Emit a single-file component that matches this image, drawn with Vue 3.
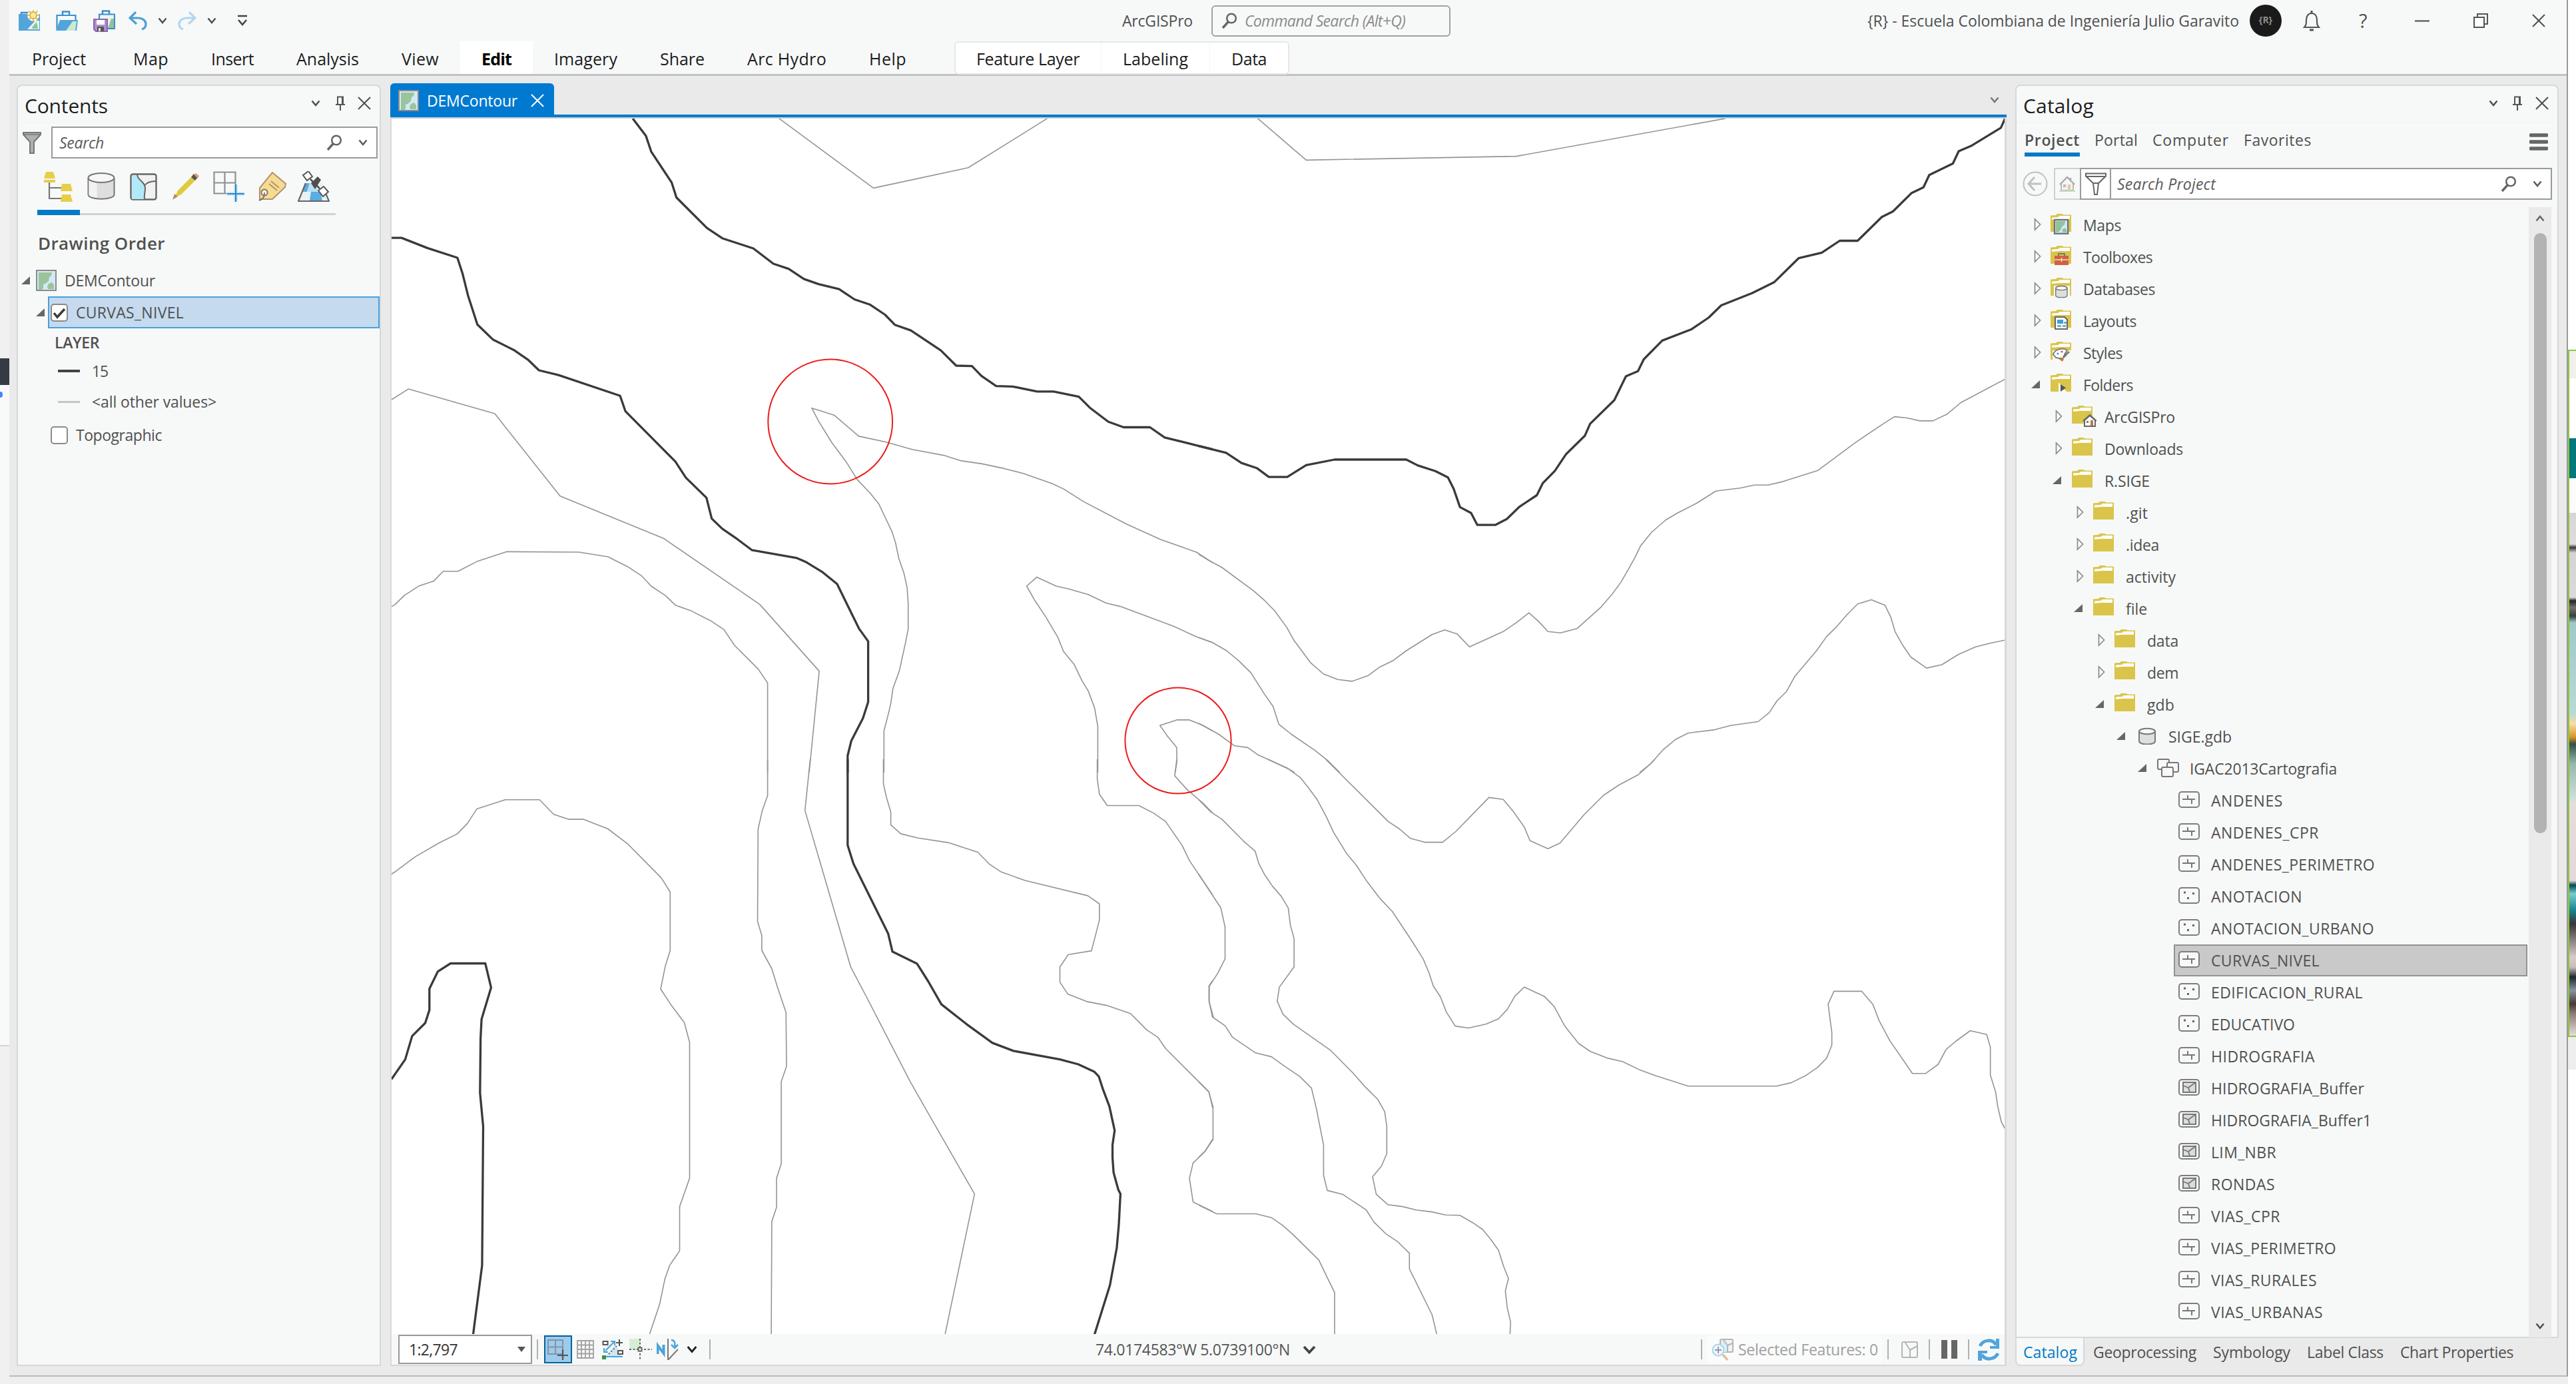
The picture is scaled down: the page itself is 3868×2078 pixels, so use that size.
<script setup>
import { h } from 'vue'

/* Spreads a label over an exact width, in pixels, through its letter spacing. */
const vFit = {
  mounted(el, { value }) {
    const natural = el.getBoundingClientRect().width
    el.style.letterSpacing = (value - natural) / el.textContent.length + 'px'
  }
}

const folder = '<path fill="#dac44a" d="M0 2.5L8 2l2-2h7l3 1.5h11V27H0z"/><path fill="#fdfdf8" d="M2 5.5l9-.5 3-2h15v5H12L2 9z"/>'
const mapArt = '<rect x="1" y="1" width="29" height="30" fill="#d3e9f5" stroke="#8b8b8b" stroke-width="2"/><path fill="#9bc49d" d="M4 4h20l-1 5-3 2-1 6-5 4-3 1v6l-2 2H4z"/><path fill="#9bc49d" d="M19 21l5-2 3 4v6h-9l-1-4z"/>'
const frame = '<rect x="1" y="1" width="30" height="23" rx="4" fill="#f8f8f8" stroke="#7d7d7d" stroke-width="2"/>'
const cyl = '<path fill="#dedede" stroke="#777" stroke-width="2" d="M1 5v15c0 6 24 6 24 0V5"/><ellipse cx="13" cy="5" rx="12" ry="4.2" fill="#f7f7f7" stroke="#777" stroke-width="2"/>'
const lens = '<circle cx="15" cy="8.5" r="6.8" fill="none" stroke="#666" stroke-width="2.6"/><path d="M10.5 13.5L2 23" stroke="#666" stroke-width="3.4"/>'

const art = {
  caret: [14, 10, '<path d="M1.5 1.5L7 8l5.500-6.500" fill="none" stroke="currentColor" stroke-width="2.500"/>'],
  bigcaret: [20, 13, '<path d="M2 2l8 8.500L18 2" fill="none" stroke="#444" stroke-width="3.800"/>'],
  up: [14, 10, '<path d="M1.500 8.500L7 2l5.500 6.500" fill="none" stroke="#666" stroke-width="2.500"/>'],
  close: [20, 20, '<path d="M1 1l18 18M19 1L1 19" stroke="currentColor" stroke-width="2" fill="none"/>'],
  pin: [14, 22, '<path d="M3 12V1.500h8V12M0 13h14M7 13v9" stroke="#555" stroke-width="2" fill="none"/><path d="M9 2h2v11H9z" fill="#555"/>'],
  lens: [24, 25, lens],
  newp: [32, 32, '<path d="M4 7V4h10v3" fill="none" stroke="#3d8fca" stroke-width="2.500"/><path fill="#52a4db" d="M0 6h32v25H0z"/><path fill="#e8f4ea" d="M13 29L25 16h6v13z"/><path fill="#8fc39b" d="M20 26l7-8 2 10h-8z"/><circle cx="22" cy="8" r="9" fill="#f7f9f9"/><path d="M22-1v18M13 8h18M15.500 1.500l13 13M28.500 1.500l-13 13" stroke="#e7c047" stroke-width="1.800"/><circle cx="22" cy="8" r="5" fill="#fbe9a8" stroke="#ddb33b" stroke-width="1.800"/>'],
  open: [33, 31, '<path d="M10 6V1.500h10V6" fill="none" stroke="#3d8fca" stroke-width="2.500"/><path fill="#f5fafc" stroke="#3d8fca" stroke-width="2.200" d="M1.500 7h28v20h-28z"/><path fill="#52a4db" d="M0 30l6-16h27l-2 16z"/><path fill="#cce9d1" d="M15 30l10-14h6l-2 14z"/>'],
  save: [33, 33, '<path d="M14 6V1.500h10V6" fill="none" stroke="#3d8fca" stroke-width="2.500"/><path fill="#eaf5f2" stroke="#3d8fca" stroke-width="2.200" d="M9 6.500h23V28H9z"/><path fill="#8fc39b" d="M22 27l5-14h4v14z"/><path fill="#b18ed0" stroke="#8a66ad" stroke-width="2" d="M1 14h20v18H4l-3-3z"/><path fill="#fff" d="M5 15h12v7H5z"/><path fill="#555" d="M6 25h10v7H6z"/><path fill="#ddd" d="M8 27h3v5H8z"/>'],
  undo: [28, 28, '<path d="M11 1L2 10l10 9M3 10h11c7 0 12 4 12 9 0 4-2 7-6 8" fill="none" stroke="currentColor" stroke-width="3.200"/>'],
  redo: [28, 28, '<path d="M17 1l9 9-10 9M25 10H14C7 10 2 14 2 19c0 4 2 7 6 8" fill="none" stroke="currentColor" stroke-width="3.200"/>'],
  custom: [16, 18, '<path d="M1 2h14M2 8l6 7 6-7" fill="none" stroke="#444" stroke-width="2.600"/>'],
  bell: [26, 32, '<path d="M2 26c3-3 3-6 3-11 0-6 3-10 8-10s8 4 8 10c0 5 0 8 3 11z" fill="none" stroke="#555" stroke-width="2.200"/><path d="M13 1v4M10 30h6" stroke="#555" stroke-width="3"/>'],
  restore: [22, 22, '<path d="M6 5V1h15v15h-4" fill="none" stroke="#555" stroke-width="2"/><path d="M1 6h15v15H1z" fill="#fff" stroke="#555" stroke-width="2"/>'],
  minimize: [22, 3, '<path d="M0 1.500h22" stroke="#555" stroke-width="2.200"/>'],
  funnel: [28, 34, '<path d="M1 2h26v3L17 16v17h-6V16L1 5z" fill="#b0b0b0" stroke="#777" stroke-width="2"/><path d="M1 5h26" stroke="#777" stroke-width="1.500"/>'],
  funnel2: [32, 34, '<path d="M1 1.500h30v4L20 16l-2 17h-4L12 16 1 5.500z" fill="#fff" stroke="#666" stroke-width="2"/><path d="M1 6h30M12 16h8" stroke="#666" stroke-width="2"/>'],
  order: [44, 45, '<path d="M9 16v24h18M9 24h18" fill="none" stroke="#777" stroke-width="2.200"/><path fill="#e5cf47" d="M4 0h11l3 10H1zM1 12h17v4H1zM28 18h13l3 11H26zM28 34h13l3 11H26z"/>'],
  drum: [42, 42, '<path fill="#dedede" stroke="#777" stroke-width="2" d="M1.500 8v25c0 9 39 9 39 0V8"/><path fill="#f3f3f3" d="M2.500 12h12v26c-7-1-12-3-12-5z"/><ellipse cx="21" cy="8" rx="19.500" ry="7" fill="#f7f7f7" stroke="#777" stroke-width="2"/>'],
  select: [41, 41, '<rect x="1.500" y="1.500" width="38" height="38" rx="3" fill="#f1f1f1" stroke="#666" stroke-width="2.400"/><path fill="#b2e9f8" d="M3 3h8c0 8 12 10 12 20 0 6-2 10-1 16H3z"/><path d="M11 2c0 9 12 10 12 21 0 6-2 10-1 17M22 19c3-5 9-7 17-7" fill="none" stroke="#666" stroke-width="2"/>'],
  pencil: [40, 40, '<path d="M3 37l5-11L30 4l6 5L13 32z" fill="#e0c93c"/><path d="M28 6l4-5 6 5-4 5z" fill="#555"/><path d="M32 2l3-2 5 4-2 4z" fill="#e49a84"/><path d="M0 40l3-9 5 4z" fill="#b88962"/>'],
  snap: [47, 47, '<path d="M1.500 1.500h32v32h-32zM17.500 1.500v32M1.500 17.500h32" fill="none" stroke="#8f8f8f" stroke-width="2.200"/><path d="M34 20v26M20 34h27" stroke="#cbe7f8" stroke-width="6"/><path d="M34 20v26M21 34h26" stroke="#2b86c4" stroke-width="2.200"/>'],
  tag: [44, 44, '<path d="M22 1l20 17-1 5-19 18H3V24z" fill="#f3dd93" stroke="#b8906a" stroke-width="2"/><path d="M17 18l12 10M20 14l12 10" stroke="#b8906a" stroke-width="2"/><circle cx="10" cy="31" r="4.500" fill="#fff" stroke="#8a7158" stroke-width="2"/><path d="M10 31c0 6-1 10-8 12" fill="none" stroke="#777" stroke-width="2"/>'],
  sat: [48, 47, '<path d="M11 18h26l10 27H1z" fill="#e6f2f4"/><path d="M11 18h7l-4 13H6zM20 31h14l3 13H18z" fill="#5aade0"/><path d="M18 18h10l2 13H14z" fill="#b9dff2"/><path d="M12 18L1 45h46l-5-12" fill="none" stroke="#666" stroke-width="2.200"/><path d="M8 6l8-6 6 8-8 6zM31 29l8-6 7 8-8 7z" fill="#fff" stroke="#555" stroke-width="2"/><path d="M20 18l10-10 5 5-9 14z" fill="#4f4f4f"/><path d="M19 12l14 14" stroke="#4f4f4f" stroke-width="2.500"/>'],
  mapdoc: [31, 32, mapArt],
  tri: [14, 13, '<path d="M13 0v12H0z" fill="#666"/>'],
  right: [11, 20, '<path d="M1.500 2v16l8-8z" fill="#fff" stroke="#8a8a8a" stroke-width="1.700"/>'],
  tick: [26, 27, '<rect x="1" y="1" width="24" height="25" rx="4" fill="#fff" stroke="#8a8a8a" stroke-width="2"/><path d="M5 14l5 6L21 8" fill="none" stroke="#3c3c3c" stroke-width="3.500"/>'],
  box: [26, 27, '<rect x="1" y="1" width="24" height="25" rx="4" fill="#fff" stroke="#8a8a8a" stroke-width="2"/>'],
  back: [38, 38, '<circle cx="19" cy="19" r="17.500" fill="none" stroke="#c0c0c0" stroke-width="2"/><path d="M18 9L9 19l9 10M9 19h19" fill="none" stroke="#c0c0c0" stroke-width="3"/>'],
  home: [24, 24, '<path d="M3 12v10h18V12" fill="#f2f2f2" stroke="#bbb" stroke-width="2"/><path d="M1 13L12 2l11 11M17 3v5" fill="none" stroke="#aaa" stroke-width="2.400"/><path d="M6 13h4v4H6z" fill="#bbb"/><path d="M13 13h4v9h-4z" fill="#e4c9ab"/><path d="M0 23h24" stroke="#c0dfbe" stroke-width="2"/>'],
  burger: [28, 28, '<path d="M2 4h24M2 14h24M2 24h24" stroke="#666" stroke-width="5.500" stroke-linecap="round"/>'],
  folder: [37, 32, folder],
  fMaps: [37, 32, folder + '<g transform="translate(6 9) scale(.65)"><rect width="31" height="32" fill="#d3e9f5" stroke="#6f7478" stroke-width="3.600"/><path fill="#8fc39b" d="M3 3h22l-2 8-6 5-3 8-6 5H3zM18 22l6-3 4 4v6h-9z"/></g>'],
  fTools: [37, 32, folder + '<path d="M12 16v-4h9v4" fill="none" stroke="#777" stroke-width="2"/><path d="M6 15h21v14H6z" fill="#d1623f"/><path d="M6 21h21M16.500 18v6" stroke="#f3d9cf" stroke-width="1.600"/>'],
  fData: [37, 32, folder + '<path d="M5 12h24v15H5z" fill="#fbfbf6"/><g transform="translate(7 12) scale(.72 .72)">' + cyl + '</g>'],
  fLayouts: [37, 32, folder + '<path d="M7 11h14l4 4v14H7z" fill="#fff" stroke="#666" stroke-width="2"/><path d="M10 15h9v6h-9z" fill="#3d9fdc"/><path d="M20 18h4v3h-4zM10 23h6v3h-6zM18 23h5v3h-5z" fill="#7da9c4"/>'],
  fStyles: [37, 32, folder + '<path d="M3 13h28v14H3z" fill="#f8f8f0"/><path d="M4 19C7 10 20 9 25 13l-4 6 2 2-6 5-9-2z" fill="#fdfdfa" stroke="#777" stroke-width="1.800"/><path d="M28 15l-9 8" stroke="#777" stroke-width="3"/><circle cx="11" cy="18" r="1.600" fill="#3d9fdc"/><circle cx="17" cy="15" r="1.600" fill="#c55"/><path d="M14 25l5 3" stroke="#c07c4b" stroke-width="4"/>'],
  fFolders: [37, 32, folder + '<path d="M12 13v16h14z" fill="#f8f8f0"/><path d="M15 16v11l8-5.500z" fill="#555"/>'],
  fHome: [37, 32, folder + '<path d="M19 22v9h16v-9l-8-7z" fill="#fff" stroke="#666" stroke-width="2"/><path d="M17 23l10-9 10 9" fill="none" stroke="#666" stroke-width="2"/><path d="M22 23h3v3h-3z" fill="#777"/><path d="M28 22h4v8h-4z" fill="#b97a4b"/>'],
  gdb: [37, 26, '<g transform="translate(4 1)">' + cyl + '</g>'],
  dataset: [37, 28, '<g fill="#f8f8f8" stroke="#777" stroke-width="2"><rect x="1" y="1" width="17" height="15" rx="2"/><rect x="15" y="6" width="17" height="14" rx="2"/><rect x="7" y="13" width="17" height="14" rx="2"/></g>'],
  line: [37, 25, frame + '<path d="M6 12h19M14 6v6M20 12v7" stroke="#777" stroke-width="2" fill="none"/>'],
  point: [37, 25, frame + '<path d="M8 6.500h3v3H8zM21 8h3v3h-3zM13 15h3v3h-3z" fill="#666"/>'],
  poly: [37, 25, frame + '<path d="M7 5h19v15H7z" fill="#dcdcdc" stroke="#777" stroke-width="2"/><path d="M7 10l8 3 11-8M15 13l2 7" fill="none" stroke="#777" stroke-width="1.800"/>'],
  drop: [12, 8, '<path d="M0 0h12L6 8z" fill="#555"/>'],
  gridplus: [34, 34, '<path d="M2 2h22v21H2zM13 2v21M2 12.500h22" fill="none" stroke="#8693a0" stroke-width="2"/><path d="M24 16v16M16 25h16" stroke="#555" stroke-width="2.200"/>'],
  grid: [26, 28, '<path d="M1 1h24v26H1zM7 1v26M13 1v26M19 1v26M1 7.500h24M1 14h24M1 20.500h24" fill="none" stroke="#a2a2a2" stroke-width="1.800"/>'],
  snap2: [34, 30, '<path d="M5 26L20 8l10 18z" fill="#cde7f7"/><path d="M5 17L18 4M5 26h26" stroke="#4aa3dc" stroke-width="2.200"/><path d="M3 13v6h6M13 3h6v6" fill="none" stroke="#4aa3dc" stroke-width="2"/><path d="M10 22L22 10" stroke="#666" stroke-dasharray="2 3" stroke-width="2"/><path d="M1.500 3h7v5h-7zM24 17h7v5h-7z" fill="#fff" stroke="#555" stroke-width="2"/><path d="M0 24h6v6H0z" fill="#3b9247"/><path d="M26 0v10M21 5h10" stroke="#555" stroke-width="2"/>'],
  cross: [34, 32, '<path fill="#d7eed6" d="M0 0h16v16H0z"/><path d="M16 0v32M0 16h34" stroke="#666" stroke-width="2" stroke-dasharray="3 2.500"/><path fill="#fff" stroke="#666" stroke-width="2" d="M13.500 13.500h5v5h-5z"/>'],
  north: [34, 32, '<path d="M1.500 23V10l9 12V9" fill="none" stroke="#4aa3dc" stroke-width="4"/><path d="M17 0v32l15-16" fill="none" stroke="#777" stroke-width="2"/><path d="M22 2c5 0 6 4 5 11M22 9l5 5 5-5" fill="none" stroke="#4aa3dc" stroke-width="2.500"/>'],
  zoomsel: [34, 33, '<rect x="13" y="1" width="19" height="19" rx="2" fill="#f2f2f2" stroke="#b5b5b5" stroke-width="2"/><path d="M14 3h5l6 9-3 8h-8z" fill="#d3f1fa"/><path d="M18 2l6 8v10M24 10l7-3" fill="none" stroke="#b5b5b5" stroke-width="2"/><circle cx="10" cy="17" r="8.500" fill="#eef6fb" stroke="#abd3ee" stroke-width="2"/><path d="M10 12v10M5 17h10" stroke="#999" stroke-width="2"/><path d="M17 24l7 8" stroke="#dcc0a4" stroke-width="3.500"/>'],
  clearsel: [25, 25, '<rect x="1" y="1" width="23" height="23" rx="2" fill="none" stroke="#b5b5b5" stroke-width="2"/><path d="M6 2l7 11v11M13 13l11-6" fill="none" stroke="#b5b5b5" stroke-width="2"/>'],
  pause: [24, 28, '<path d="M0 0h9v28H0zM15 0h9v28h-9z" fill="#666"/>'],
  refresh: [33, 33, '<path d="M3 11C8 1 22 0 27 9M30 22C25 32 11 33 6 24" fill="none" stroke="#52a4db" stroke-width="5"/><path d="M32 0v15H18v-4h9V0zM0 33V18h14v4H6v11z" fill="#52a4db"/>']
}

const Icon = ({ name }) => {
  const [w, ht, body] = art[name]
  return h('svg', { width: w, height: ht, viewBox: `0 0 ${w} ${ht}`, innerHTML: body })
}

const tabs = [['Project', 81], ['Map', 53], ['Insert', 64], ['Analysis', 94], ['View', 56], ['Edit', 45], ['Imagery', 95], ['Share', 67], ['Arc Hydro', 119], ['Help', 56]]
const contextTabs = [['Feature Layer', 155], ['Labeling', 98], ['Data', 53]]
const listModes = ['order', 'drum', 'select', 'pencil', 'snap', 'tag', 'sat']
const catalogTabs = [['Project', 83], ['Portal', 65], ['Computer', 115], ['Favorites', 102]]
const paneTabs = [['Catalog', 81], ['Geoprocessing', 155], ['Symbology', 116], ['Label Class', 115], ['Chart Properties', 170]]

/* level, state (c closed, o open, - leaf), icon, label, label width */
const tree = [
  [0, 'c', 'fMaps', 'Maps', 57], [0, 'c', 'fTools', 'Toolboxes', 104], [0, 'c', 'fData', 'Databases', 108],
  [0, 'c', 'fLayouts', 'Layouts', 80], [0, 'c', 'fStyles', 'Styles', 59], [0, 'o', 'fFolders', 'Folders', 75],
  [1, 'c', 'fHome', 'ArcGISPro', 106], [1, 'c', 'folder', 'Downloads', 118], [1, 'o', 'folder', 'R.SIGE', 68],
  [2, 'c', 'folder', '.git', 33], [2, 'c', 'folder', '.idea', 50], [2, 'c', 'folder', 'activity', 75],
  [2, 'o', 'folder', 'file', 32], [3, 'c', 'folder', 'data', 47], [3, 'c', 'folder', 'dem', 47],
  [3, 'o', 'folder', 'gdb', 41], [4, 'o', 'gdb', 'SIGE.gdb', 95], [5, 'o', 'dataset', 'IGAC2013Cartografia', 221],
  [6, '-', 'line', 'ANDENES', 108], [6, '-', 'line', 'ANDENES_CPR', 162], [6, '-', 'line', 'ANDENES_PERIMETRO', 246],
  [6, '-', 'point', 'ANOTACION', 137], [6, '-', 'point', 'ANOTACION_URBANO', 245], [6, '-', 'line', 'CURVAS_NIVEL', 163],
  [6, '-', 'point', 'EDIFICACION_RURAL', 228], [6, '-', 'point', 'EDUCATIVO', 126], [6, '-', 'line', 'HIDROGRAFIA', 156],
  [6, '-', 'poly', 'HIDROGRAFIA_Buffer', 230], [6, '-', 'poly', 'HIDROGRAFIA_Buffer1', 241], [6, '-', 'poly', 'LIM_NBR', 98],
  [6, '-', 'poly', 'RONDAS', 96], [6, '-', 'line', 'VIAS_CPR', 104], [6, '-', 'line', 'VIAS_PERIMETRO', 188],
  [6, '-', 'line', 'VIAS_RURALES', 159], [6, '-', 'line', 'VIAS_URBANAS', 168]
]

const G = 1240 / 1568
const N = 1000 / 1568
const S = 900 / 1568
const sheets = [
  {
    x: -8, y: -18, sx: G, sy: N,
    index: [
      '468,28 493,69 503,106 542,179 551,214 609,286 638,310 697,334 735,370 764,382 793,406 821,418 860,430 889,454 918,466 947,490 966,514 996,527 1053,574 1082,610 1112,611 1130,634 1158,658 1189,659 1236,671 1267,671 1315,683 1336,709 1371,742 1400,755 1450,755 1478,779 1543,799 1569,807',
      '10,309 29,309 78,333 135,356 145,394 155,444 173,513 203,549 242,573 270,597 290,621 327,632 444,681 454,717 549,836 569,874 608,921 618,970 638,994 666,1018 694,1044 780,1063 798,1073 827,1095 856,1124 898,1230 915,1259 915,1402 905,1440 883,1493 876,1528 876,1568'
    ],
    minor: [
      '746,28 925,192 1105,144 1255,28',
      '10,690 42,665 206,723 330,917 527,1017 709,1172 822,1329 803,1568',
      '10,1177 16,1173 34,1151 63,1128 90,1117 108,1094 136,1094 174,1070 228,1048 366,1049 421,1060 458,1083 485,1105 503,1129 530,1151 549,1174 577,1186 615,1210 641,1231 661,1268 706,1324 724,1357 724,1568',
      '945,1568 945,1470 954,1427 958,1405 962,1370 974,1329 986,1262 991,1230 991,1170 989,1133 983,1099 973,1063 967,1027 960,1000 948,969 935,935 918,909 894,878 873,836 846,791 821,741 808,710 851,727 897,776 949,790 998,807 1058,821 1092,834 1131,841 1173,852 1210,864 1265,888 1287,901 1324,930 1404,982 1470,1019 1538,1049 1569,1074',
      '1351,1568 1351,1459 1345,1416 1333,1376 1321,1352 1306,1313 1286,1283 1275,1249 1252,1201 1232,1164 1216,1129 1235,1108 1272,1129 1297,1136 1333,1149 1367,1169 1394,1177 1494,1223 1538,1248 1569,1262',
      '1498,1568 1501,1543 1501,1509 1482,1480 1469,1457 1501,1444 1525,1444 1551,1457 1569,1470'
    ]
  },
  {
    x: 1212, y: -18, sx: G, sy: N,
    index: ['0,799 52,815 81,839 110,851 133,872 168,872 204,844 258,831 394,831 416,845 449,858 473,873 484,900 496,943 517,957 529,985 563,985 585,971 609,942 642,915 653,887 676,858 697,819 733,775 743,747 789,691 811,635 834,623 845,595 880,551 936,524 968,497 992,468 1051,439 1093,413 1139,357 1183,344 1217,316 1251,316 1297,260 1318,247 1353,204 1376,190 1387,161 1432,134 1443,105 1466,93 1523,50 1531,28'],
    minor: [
      '112,28 204,126 603,117 1000,28',
      '0,1054 20,1069 44,1085 105,1141 125,1163 144,1187 167,1226 180,1255 212,1309 237,1336 264,1349 291,1353 321,1340 343,1320 368,1305 394,1281 443,1243 467,1232 491,1242 514,1272 578,1236 603,1215 627,1192 646,1213 663,1236 687,1239 718,1229 764,1178 785,1148 802,1119 815,1091 828,1062 839,1034 860,1002 887,973 909,957 945,934 982,905 1028,898 1055,891 1081,891 1109,883 1175,857 1248,790 1302,745 1321,730 1345,733 1369,740 1394,740 1421,724 1447,697 1532,641',
      '0,1250 26,1262 53,1281 77,1306 99,1333 124,1382 141,1412 152,1454 175,1477 221,1516 245,1540 268,1568',
      '0,1452 37,1477 68,1505 93,1509 112,1526 139,1541 169,1558 182,1568',
      '837,1568 859,1546 881,1515 905,1490 929,1475 980,1467 1010,1457 1062,1448 1083,1427 1098,1399 1116,1377 1132,1341 1173,1281 1192,1248 1210,1226 1231,1196 1251,1171 1277,1161 1303,1174 1314,1202 1322,1236 1337,1269 1352,1296 1382,1322 1411,1314 1442,1290 1475,1272 1504,1263 1532,1256'
    ]
  },
  {
    x: -8, y: 962, sx: G, sy: S,
    index: [
      '876,0 876,225 887,273 953,456 961,503 1008,535 1029,581 1054,641 1102,693 1151,742 1191,763 1279,785 1314,798 1344,817 1353,830 1361,864 1373,908 1383,971 1379,1009 1379,1042 1381,1081 1390,1126 1394,1137 1391,1217 1387,1278 1374,1376 1345,1504',
      '10,837 36,785 49,724 74,690 82,656 82,600 98,555 122,534 188,534 199,597 181,680 179,730 178,873 184,960 182,1324 165,1504'
    ],
    minor: [
      '724,0 724,95 714,134 706,183 705,424 713,461 713,500 732,548 743,597 759,662 760,803 750,843 750,1058 741,1096 741,1172 732,1209 731,1504',
      '805,0 795,134 882,544 912,622 995,844 1039,950 1117,1137 1061,1504',
      '10,300 16,295 55,255 100,219 135,195 154,168 172,130 226,106 291,106 318,144 346,157 374,157 421,182 458,221 522,310 539,347 539,500 530,540 521,601 540,641 566,689 576,741 576,1096 557,1170 557,1286 538,1324 529,1360 519,1426 500,1504',
      '944,0 944,65 950,101 958,138 958,172 977,195 1010,206 1067,218 1123,243 1145,274 1168,295 1213,317 1332,357 1354,378 1354,421 1339,501 1295,511 1279,543 1279,583 1294,614 1331,634 1368,644 1413,665 1444,708 1465,727 1480,757 1562,870 1569,912',
      '1350,0 1350,51 1354,91 1369,121 1429,121 1457,141 1480,163 1511,225 1525,265 1569,355',
      '1501,0 1497,43 1521,80 1551,115 1569,141',
      '1569,579 1562,593 1562,632 1569,676',
      '1569,994 1554,1027 1532,1056 1525,1096 1532,1158 1569,1183'
    ]
  },
  {
    x: 1212, y: 962, sx: G, sy: S,
    index: [],
    minor: [
      '131,0 171,26 193,48 208,74 225,106 241,147 256,191 281,247 299,277 319,319 344,364 368,399 405,476 426,522 437,558 445,592 459,622 470,661 487,698 512,703 545,693 569,679 586,654 600,620 618,596 656,620 675,647 695,698 721,743 743,764 777,782 805,791 838,813 866,827 903,843 929,855 1097,855 1125,846 1153,827 1175,806 1192,782 1202,748 1202,714 1195,641 1206,607 1259,607 1280,641 1292,684 1312,736 1355,822 1380,822 1404,798 1419,759 1438,737 1465,710 1496,720 1503,753 1503,826 1513,870 1517,908 1524,949 1532,969',
      '241,0 360,163 381,182 402,207 429,217 463,217 488,189 551,100 578,105 598,138 618,177 629,213 663,234 686,219 731,146 768,95 797,68 835,40 857,13 866,0',
      '0,106 23,138 44,157 85,214 107,240 114,273 125,302 140,332 157,359 170,389 174,434 181,469 181,543 153,596 149,633 160,667 180,693 250,761 291,818 316,857 340,890 353,922 357,960 357,1032 347,1064 330,1092 337,1138 359,1165 387,1170 413,1179 443,1184 469,1192 496,1193 520,1212 539,1230 555,1257 569,1284 579,1327 588,1358 582,1391 586,1436 592,1472 591,1504',
      '0,301 42,389 50,439 50,522 36,560 20,594 20,635 28,676 50,697 64,727 108,768 138,778 163,803 192,830 214,860 223,912 237,1009 237,1088 244,1128 273,1138 318,1179 333,1211 355,1241 377,1261 400,1292 400,1333 443,1453 452,1504',
      '0,844 19,870 27,909 27,995 12,1025 0,1041',
      '0,1166 34,1189 109,1189 138,1199 159,1219 178,1242 228,1310 243,1353 258,1395 258,1504'
    ]
  }
]
const trace = (sheet, line) =>
  line.split(' ').map((p) => {
    const [px, py] = p.split(',')
    return (sheet.x + px * sheet.sx).toFixed(1) + ',' + (sheet.y + py * sheet.sy).toFixed(1)
  }).join(' ')
const minor = sheets.flatMap((s) => s.minor.map((l) => trace(s, l)))
const index = sheets.flatMap((s) => s.index.map((l) => trace(s, l)))
</script>

<template>
  <div class="screen">
    <div class="edge-left"><i class="dark"></i><i class="pale"><b></b></i></div>
    <div class="app">
      <header>
        <div class="titlebar">
          <div class="quick">
            <Icon name="newp" /><Icon name="open" /><Icon name="save" />
            <Icon name="undo" class="blue" /><Icon name="caret" />
            <Icon name="redo" class="faded" /><Icon name="caret" /><Icon name="custom" />
          </div>
          <span v-fit="106" class="project-name">ArcGISPro</span>
          <div class="command"><Icon name="lens" /><em v-fit="241">Command Search (Alt+Q)</em></div>
          <span v-fit="558" class="account">{R} - Escuela Colombiana de Ingeniería Julio Garavito</span>
          <div class="avatar">{R}</div>
          <div class="window-buttons">
            <Icon name="bell" /><span class="help">?</span><Icon name="minimize" /><Icon name="restore" /><Icon name="close" />
          </div>
        </div>
        <nav class="ribbon">
          <div v-for="t in tabs" :key="t[0]" class="tab" :class="{ active: t[0] === 'Edit' }"><span v-fit="t[1]">{{ t[0] }}</span></div>
          <div class="context">
            <div v-for="t in contextTabs" :key="t[0]" class="tab"><span v-fit="t[1]">{{ t[0] }}</span></div>
          </div>
        </nav>
      </header>

      <main>
        <section class="panel contents">
          <div class="panel-head">
            <h2 v-fit="125">Contents</h2>
            <div class="tools"><Icon name="caret" /><Icon name="pin" /><Icon name="close" /></div>
          </div>
          <div class="search-row">
            <Icon name="funnel" />
            <div class="search"><em v-fit="67">Search</em><Icon name="lens" /><Icon name="caret" /></div>
          </div>
          <div class="modes"><Icon v-for="m in listModes" :key="m" :name="m" /></div>
          <div class="mode-line"><i></i></div>
          <h3 v-fit="191">Drawing Order</h3>
          <div class="row map-row"><Icon name="tri" /><Icon name="mapdoc" /><span v-fit="136">DEMContour</span></div>
          <div class="row layer-row"><Icon name="tri" /><div class="chosen"><Icon name="tick" /><span v-fit="162">CURVAS_NIVEL</span></div></div>
          <div class="row field"><b v-fit="67">LAYER</b></div>
          <div class="row legend"><i class="strong"></i><span v-fit="24">15</span></div>
          <div class="row legend other"><i></i><span v-fit="187">&lt;all other values&gt;</span></div>
          <div class="row base"><Icon name="box" /><span v-fit="129">Topographic</span></div>
        </section>

        <section class="view">
          <div class="view-tabs">
            <div class="view-tab"><Icon name="mapdoc" /><span v-fit="136">DEMContour</span><Icon name="close" /></div>
            <Icon name="caret" />
          </div>
          <svg class="map" width="2422" height="1825" viewBox="0 0 2422 1825">
            <polyline v-for="(l, i) in minor" :key="'m' + i" class="minor" :points="l" />
            <polyline v-for="(l, i) in index" :key="'i' + i" class="index" :points="l" />
            <circle cx="658.700" cy="455" r="93.400" />
            <circle cx="1181" cy="934" r="79.600" />
          </svg>
          <footer>
            <div class="scale"><span v-fit="73">1:2,797</span><Icon name="drop" /></div>
            <i class="bar"></i>
            <div class="pressed"><Icon name="gridplus" /></div>
            <div class="status-icons"><Icon name="grid" /><Icon name="snap2" /><Icon name="cross" /><Icon name="north" /><Icon name="caret" class="wide" /></div>
            <i class="bar"></i>
            <div class="coords"><span v-fit="292">74.0174583°W 5.0739100°N</span><Icon name="bigcaret" /></div>
            <i class="bar"></i>
            <div class="selected"><Icon name="zoomsel" /><span v-fit="210">Selected Features: 0</span></div>
            <i class="bar"></i><Icon name="clearsel" class="clearsel" /><i class="bar"></i><Icon name="pause" class="pause" /><i class="bar"></i><Icon name="refresh" class="refresh" />
          </footer>
        </section>

        <aside>
          <section class="panel catalog">
            <div class="panel-head">
              <h2 v-fit="106">Catalog</h2>
              <div class="tools"><Icon name="caret" /><Icon name="pin" /><Icon name="close" /></div>
            </div>
            <div class="cat-tabs">
              <div v-for="(t, i) in catalogTabs" :key="t[0]" :class="{ on: i === 0 }"><span v-fit="t[1]">{{ t[0] }}</span></div>
              <Icon name="burger" />
            </div>
            <div class="cat-search">
              <Icon name="back" />
              <div class="cell home"><Icon name="home" /></div>
              <div class="cell filter"><Icon name="funnel2" /></div>
              <div class="search"><em v-fit="148">Search Project</em><Icon name="lens" /><Icon name="caret" /></div>
            </div>
            <div class="tree-area">
              <div class="tree">
                <div v-for="(r, i) in tree" :key="i" class="node" :style="{ paddingLeft: 19 + r[0] * 32 + 'px' }">
                  <div class="arrow"><Icon v-if="r[1] === 'c'" name="right" /><Icon v-if="r[1] === 'o'" name="tri" /></div>
                  <div class="item" :class="{ current: r[3] === 'CURVAS_NIVEL' }"><Icon :name="r[2]" /><span v-fit="r[4]">{{ r[3] }}</span></div>
                </div>
              </div>
              <div class="scroll"><Icon name="up" /><i></i><Icon name="caret" /></div>
            </div>
          </section>
          <div class="pane-tabs">
            <div v-for="(t, i) in paneTabs" :key="t[0]" :class="{ on: i === 0 }"><span v-fit="t[1]">{{ t[0] }}</span></div>
          </div>
        </aside>
      </main>
    </div>
    <div class="edge-right"><div class="page"></div></div>
  </div>
</template>

<style>
body { background: #eee; overflow: hidden; }
</style>

<style scoped>
* { box-sizing: border-box; }
.screen { display: flex; width: 3868px; height: 2078px; overflow: hidden; background: #eee; color: #505050; font: 23px/30px "Open Sans", "Noto Sans", sans-serif; }
svg { display: block; flex: none; }
span, em, b, h2, h3 { white-space: pre; flex: none; }
h2, h3 { margin: 0; width: max-content; }

.edge-left { width: 14px; height: 2078px; background: #f0f0f0; padding-top: 538px; flex: none; }
.edge-left .dark { display: block; height: 40px; background: #363a45; }
.edge-left .pale { display: block; height: 993px; background: #f7f9fb; border-bottom: 2px solid #d4d4d4; padding-top: 10px; }
.edge-left b { display: block; width: 4px; height: 9px; background: #4485f4; border-radius: 0 4px 4px 0; }

.app { width: 3842px; height: 2067px; background: #eaeaea; border-right: 2px solid #999; border-bottom: 2px solid #b9b9b9; flex: none; }
header { height: 114px; background: #f7f9f9; border-bottom: 3px solid #c1c1c7; }
.titlebar { height: 62px; display: flex; align-items: center; }
.quick { display: grid; grid-template-columns: 56px 56px 53px 44px 30px 44px 45px 20px; align-items: center; margin-left: 14px; width: 1657px; }
.blue { color: #4a9fd8; }
.faded { color: #b5d6ee; }
.command { margin-left: 28px; width: 359px; height: 47px; border: 2px solid #a0a2a2; border-radius: 6px; display: flex; align-items: center; padding-left: 13px; color: #8b8b8b; }
.command em { margin-left: 11px; }
.account { margin-left: 626px; }
.avatar { margin-left: 16px; width: 48px; height: 48px; border-radius: 50%; background: #1a1a1a; color: #8f8f8f; font-size: 14px; font-weight: 700; line-height: 46px; text-align: center; flex: none; }
.window-buttons { display: grid; grid-template-columns: 84px 84px 88px 88px 22px; align-items: center; margin-left: 32px; }
.help { font-size: 29px; }

.ribbon { display: flex; height: 49px; color: #1c1c1c; font-size: 25px; }
.tab { padding: 0 32px; display: flex; align-items: center; height: 49px; padding-top: 3px; }
.tab:first-child { padding-left: 34px; }
.ribbon > .tab:first-child { padding-right: 39px; }
.tab.active { background: #fff; font-weight: 700; color: #000; }
.context { display: flex; margin-left: 40px; background: #fff; border: 2px solid #e6e7e7; border-radius: 6px; height: 50px; }
.context .tab { border-left: 1px solid #f5f5f5; height: 46px; padding-top: 2px; }
.context .tab:first-child { padding-left: 31px; border: 0; }

main { display: flex; padding: 13px 12px 0 11px; }
.panel { background: #f7f9f8; border: 2px solid #d6d7da; border-radius: 8px 8px 0 0; }
.contents { width: 547px; height: 1924px; flex: none; }
.panel-head { height: 55px; display: flex; justify-content: space-between; align-items: center; padding: 6px 13px 0 10px; color: #4f4f4f; border-bottom: 1px solid #f1f2f2; }
.panel-head h2 { font-size: 30px; font-weight: 400; color: #1e1e1e; line-height: 40px; }
.tools { display: flex; align-items: center; gap: 19px; padding-bottom: 9px; }
.tools svg:first-child { margin-right: 4px; }
.search-row { display: flex; align-items: center; height: 60px; padding-left: 7px; }
.search { display: flex; align-items: center; height: 48px; border: 2px solid #9a9a9a; background: #fff; color: #5a5a5a; }
.search-row .search { margin-left: 15px; width: 490px; padding: 0 13px 0 10px; }
.search em { margin-right: auto; }
.search svg + svg { margin-left: 24px; }
.modes { display: grid; grid-template-columns: 66px 64px 64px 61px 67px 60px 50px; align-items: center; height: 56px; margin: 8px 0 0 38px; }
.mode-line { margin: 7px 0 0 29px; width: 448px; height: 8px; border-bottom: 3px solid #d0d2d2; }
.mode-line i { display: block; width: 64px; height: 8px; background: #007ac6; }
h3 { font-size: 26px; font-weight: 600; line-height: 36px; margin: 24px 0 0 30px; }
.row { display: flex; align-items: center; }
.map-row { height: 48px; margin-top: 14px; padding-left: 5px; }
.map-row svg + svg { margin: 0 12px 0 8px; }
.layer-row { height: 48px; padding-left: 27px; }
.chosen { display: flex; align-items: center; margin-left: 4px; width: 498px; height: 48px; background: #c5daee; border: 2px solid #48a0dd; padding-left: 2px; }
.chosen span { margin-left: 12px; }
.field { height: 42px; padding-left: 55px; }
.field b { font-weight: 600; }
.legend { height: 44px; padding-left: 60px; }
.legend i { width: 33px; height: 3px; background: #c4c6c6; margin-right: 18px; }
.legend i.strong { height: 4px; background: #444; }
.other { height: 48px; }
.base { height: 52px; padding-left: 49px; }
.base span { margin-left: 12px; }

.view { width: 2427px; height: 1924px; margin-left: 14px; flex: none; }
.view-tabs { height: 49px; border-bottom: 4px solid #007ad0; display: flex; align-items: center; justify-content: space-between; padding-right: 11px; color: #777; }
.view-tab { width: 246px; height: 49px; background: #007ad0; color: #fff; border-radius: 6px 6px 0 0; display: flex; align-items: center; padding: 2px 0 0 12px; }
.view-tab span { margin: 0 20px 0 12px; }
.map { background: #fff; border-top: 2px solid #ccc; height: 1827px; width: 2427px; border-left: 2px solid #d9d9d9; border-right: 3px solid #d9d9d9; }
.map polyline { fill: none; stroke-linejoin: round; }
.minor { stroke: #949494; stroke-width: 1.6; }
.index { stroke: #3a3a3a; stroke-width: 3.3; }
.map circle { fill: none; stroke: #ec1c1c; stroke-width: 2; }
footer { display: flex; align-items: center; height: 48px; background: #f7f9f8; border-left: 2px solid #d9d9d9; border-right: 3px solid #d9d9d9; border-bottom: 2px solid #d6d7da; padding-left: 10px; }
footer > * { flex: none; }
.scale { width: 201px; height: 44px; border: 2px solid #999; background: #fff; display: flex; align-items: center; justify-content: space-between; padding: 0 8px 0 14px; color: #333; }
.bar { width: 2px; height: 30px; background: #b0b0b0; }
.scale + .bar { margin: 0 9px 0 7px; }
.pressed { width: 42px; height: 42px; background: #9ccbed; border: 2px solid #00629f; padding: 3px 0 0 2px; }
.status-icons { display: grid; grid-template-columns: 38px 41px 41px 46px 33px; align-items: center; margin-left: 7px; color: #222; }
.status-icons .wide { transform: scale(1.15); }
.coords { display: flex; align-items: center; margin: 0 577px 0 578px; width: 332px; color: #555; }
.coords svg { margin-left: 19px; }
.selected { display: flex; align-items: center; margin: 0 8px 0 7px; width: 263px; height: 42px; padding-left: 7px; background: #fafbfb; color: #a0a0a0; }
.selected span { margin-left: 6px; }
.clearsel { margin: 0 16px 0 19px; }
.pause { margin: 0 16px 0 17px; }
.refresh { margin-left: 13px; }

aside { width: 816px; margin-left: 13px; flex: none; }
.catalog { height: 1882px; }
.catalog .tools { gap: 20px; }
.catalog .tools svg:first-child { margin-right: 2px; }
.cat-tabs { display: flex; gap: 22px; height: 52px; padding: 9px 14px 0 12px; }
.cat-tabs div { height: 42px; padding-top: 2px; }
.cat-tabs .on { border-bottom: 6px solid #007ac6; font-weight: 600; }
.cat-tabs svg { margin: 6px 0 0 auto; }
.cat-search { display: flex; align-items: center; margin-top: 16px; height: 48px; padding-left: 9px; }
.cell { height: 48px; display: flex; align-items: center; justify-content: center; border: 2px solid #9a9a9a; border-right: 0; }
.home { width: 39px; margin-left: 9px; border-color: #cfcfcf; padding-right: 2px; }
.filter { width: 45px; background: #fff; }
.cat-search .search { width: 664px; padding: 0 13px 0 9px; }
.tree-area { display: flex; margin-top: 11px; height: 1697px; }
.tree { width: 769px; padding-top: 3px; overflow: hidden; }
.node { display: flex; height: 48px; flex: none; }
.arrow { width: 19px; height: 46px; display: flex; align-items: center; padding-left: 7px; flex: none; }
.arrow svg[width="14"] { margin-left: -4px; }
.item { display: flex; align-items: center; height: 48px; padding-left: 13px; flex: none; }
.item span { margin-left: 12px; }
.item.current { width: 531px; background: #c9c9c9; border: 2px solid #929292; margin-left: 6px; padding-left: 5px; margin-right: -20px; }
.item svg { margin-top: -3px; }
.scroll { width: 34px; background: #eaeaea; display: flex; flex-direction: column; align-items: center; padding: 12px 0; }
.scroll i { width: 19px; height: 901px; background: #b3b3b3; border-radius: 10px; margin: 17px 0 auto; }
.pane-tabs { display: flex; }
.pane-tabs div { height: 42px; padding: 6px 0 0 25px; }
.pane-tabs .on { width: 104px; background: #f7f9f8; border: 2px solid #d6d7da; border-top: 0; border-radius: 0 0 8px 8px; padding: 6px 0 0 10px; color: #0079c9; margin-right: -12px; }

.edge-right { width: 12px; height: 2078px; padding-top: 525px; background: linear-gradient(#fff 1557px, #eee 1557px, #eee 1606px, #fff 1606px); }
.page { height: 1032px; border: solid #8cc63f; border-width: 2px 0 2px 2px; background: linear-gradient(#f1eeec 41px, #fff 41px, #fff 131px, #00777b 131px, #00777b 191px, #fbfbfb 191px, #fbfbfb 243px, #d9d4d5 243px, #e0dbdc 290px, #3c3737 295px, #d6d1d2 303px, #ddd9da 370px, #252525 375px, #777072 385px, #34403d 398px, #9fc9c7 408px, #b9d9d5 545px, #f8dda4 560px, #d49327 580px, #344f45 590px, #99b8ad 620px, #c9dfd9 670px, #e7dcdc 680px, #e3d8da 795px, #064951 802px, #77cdd0 815px, #15858d 840px, #3b3437 860px, #d8cccb 910px, #c9bebe 925px, #20282c 940px, #8794a0 960px, #49383a 980px, #8c7b78 995px, #e6dcda 1028px); }
</style>
